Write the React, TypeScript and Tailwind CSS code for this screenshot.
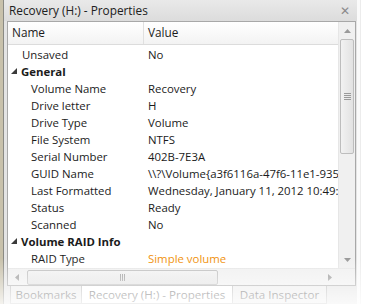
import React from "react";

type Row =
  | { kind: "cat"; label: string }
  | { kind: "prop"; label: string; value: string; indent: "top" | "child"; color?: string };

const rows: Row[] = [
  { kind: "prop", label: "Unsaved", value: "No", indent: "top" },
  { kind: "cat", label: "General" },
  { kind: "prop", label: "Volume Name", value: "Recovery", indent: "child" },
  { kind: "prop", label: "Drive letter", value: "H", indent: "child" },
  { kind: "prop", label: "Drive Type", value: "Volume", indent: "child" },
  { kind: "prop", label: "File System", value: "NTFS", indent: "child" },
  { kind: "prop", label: "Serial Number", value: "402B-7E3A", indent: "child" },
  { kind: "prop", label: "GUID Name", value: "\\\\?\\Volume{a3f6116a-47f6-11e1-935f-806e6f6e6963}", indent: "child" },
  { kind: "prop", label: "Last Formatted", value: "Wednesday, January 11, 2012 10:49:53 AM", indent: "child" },
  { kind: "prop", label: "Status", value: "Ready", indent: "child" },
  { kind: "prop", label: "Scanned", value: "No", indent: "child" },
  { kind: "cat", label: "Volume RAID Info" },
  { kind: "prop", label: "RAID Type", value: "Simple volume", indent: "child", color: "text-[#f0900a]" },
];

function Tri() {
  return (
    <svg width="7" height="7" viewBox="0 0 7 7" className="shrink-0">
      <polygon points="6,0 6,6 0,6" fill="#3a3a3a" />
    </svg>
  );
}

export default function App() {
  return (
    <div
      className="relative w-[373px] h-[304px] overflow-hidden bg-white text-[11.4px] text-[#1b1b1b] flex"
      style={{ fontFamily: '"Segoe UI", "Open Sans", "Noto Sans", sans-serif' }}
    >
      {/* left desktop strip */}
      <div className="w-[3px] h-full bg-[#c8c1ab]" />
      <div className="w-[1px] h-full bg-[#8a8a84]" />
      {/* panel */}
      <div className="w-[353px] h-full flex flex-col bg-[#e4e4e4]">
        {/* title bar */}
        <div className="h-[21px] flex items-center justify-between pl-[5px] pr-[7px] bg-gradient-to-b from-[#e9e9e9] to-[#dcdcdc]">
          <span className="leading-none text-[#202020] text-[11.8px]">Recovery (H:) - Properties</span>
          <span className="text-[#8a8a8a] text-[12px] leading-none">✕</span>
        </div>
        {/* grid frame */}
        <div className="flex-1 flex flex-col ml-[3px] mr-[1px] border border-[#a8a8a8] bg-white">
          <div className="flex flex-1 min-h-0">
            {/* grid */}
            <div className="flex-1 flex flex-col min-w-0 overflow-hidden">
              {/* header */}
              <div className="h-[23px] flex shrink-0 items-center bg-gradient-to-b from-white to-[#f3f3f3] border-b border-[#dcdcdc] text-[11.8px]">
                <div className="w-[136px] h-full flex items-center pl-[4px] border-r border-[#e0e0e0]">Name</div>
                <div className="flex-1 pl-[4px]">Value</div>
              </div>
              <div className="h-[1px] shrink-0" />
              {rows.map((r, i) =>
                r.kind === "cat" ? (
                  <div key={i} className="h-[17px] shrink-0 flex items-center pl-[3px] gap-[3px] font-bold whitespace-nowrap">
                    <Tri />
                    <span>{r.label}</span>
                  </div>
                ) : (
                  <div key={i} className="h-[17px] shrink-0 flex items-center whitespace-nowrap">
                    <div className={`w-[136px] shrink-0 ${r.indent === "top" ? "pl-[14px]" : "pl-[23px]"}`}>{r.label}</div>
                    <div className={`pl-[4px] ${r.color ?? ""}`}>{r.value}</div>
                  </div>
                )
              )}
            </div>
            {/* vertical scrollbar */}
            <div className="w-[17px] flex flex-col bg-[#f0f0f0] border-l border-[#e6e6e6]">
              <div className="h-[17px] flex items-center justify-center">
                <svg width="7" height="4" viewBox="0 0 7 4"><polygon points="0,4 7,4 3.5,0" fill="#9a9a9a" /></svg>
              </div>
              <div className="mx-[1px] h-[115px] rounded-[2px] border border-[#bdbdbd] bg-gradient-to-r from-[#f2f2f2] to-[#e2e2e2] flex items-center justify-center">
                <div className="flex flex-col gap-[1px]">
                  <div className="w-[7px] h-[1px] bg-[#9a9a9a]" />
                  <div className="w-[7px] h-[1px] bg-[#9a9a9a]" />
                  <div className="w-[7px] h-[1px] bg-[#9a9a9a]" />
                  <div className="w-[7px] h-[1px] bg-[#9a9a9a]" />
                </div>
              </div>
              <div className="flex-1" />
              <div className="h-[17px] flex items-center justify-center">
                <svg width="7" height="4" viewBox="0 0 7 4"><polygon points="0,0 7,0 3.5,4" fill="#9a9a9a" /></svg>
              </div>
            </div>
          </div>
          {/* horizontal scrollbar */}
          <div className="h-[17px] shrink-0 flex items-center bg-[#f0f0f0] border-t border-[#e6e6e6]">
            <div className="w-[17px] h-full flex items-center justify-center">
              <svg width="4" height="7" viewBox="0 0 4 7"><polygon points="4,0 4,7 0,3.5" fill="#9a9a9a" /></svg>
            </div>
            <div className="ml-[2px] w-[191px] h-[15px] rounded-[2px] border border-[#bdbdbd] bg-gradient-to-b from-[#f2f2f2] to-[#e2e2e2] flex items-center justify-center">
              <div className="flex gap-[1px]">
                <div className="w-[1px] h-[7px] bg-[#9a9a9a]" />
                <div className="w-[1px] h-[7px] bg-[#9a9a9a]" />
                <div className="w-[1px] h-[7px] bg-[#9a9a9a]" />
              </div>
            </div>
            <div className="flex-1" />
            <div className="w-[17px] h-full flex items-center justify-center">
              <svg width="4" height="7" viewBox="0 0 4 7"><polygon points="0,0 0,7 4,3.5" fill="#9a9a9a" /></svg>
            </div>
            <div className="w-[17px] h-full bg-[#f0f0f0]" />
          </div>
        </div>
        {/* tabs */}
        <div className="h-[18px] shrink-0 flex items-start pl-[6px] bg-[#e4e4e4] text-[#555] whitespace-nowrap text-[11.6px]">
          <div className="w-[72px] h-full flex items-center justify-center border-x border-b border-[#b8b8b8] bg-[#ececec]">Bookmarks</div>
          <div className="w-[151px] h-full flex items-center justify-center border-r border-b border-[#b8b8b8] bg-white">Recovery (H:) - Properties</div>
          <div className="w-[94px] h-full flex items-center justify-center border-r border-b border-[#b8b8b8] bg-[#ececec]">Data Inspector</div>
        </div>
      </div>
      <div className="w-[3px] h-full bg-[#fafafa]" />
      <div className="w-[1px] h-full bg-[#ececec]" />
      {/* bottom fade */}
      <div className="pointer-events-none absolute left-0 right-0 bottom-0 h-[46px] bg-gradient-to-b from-white/0 to-white/80" />
    </div>
  );
}
